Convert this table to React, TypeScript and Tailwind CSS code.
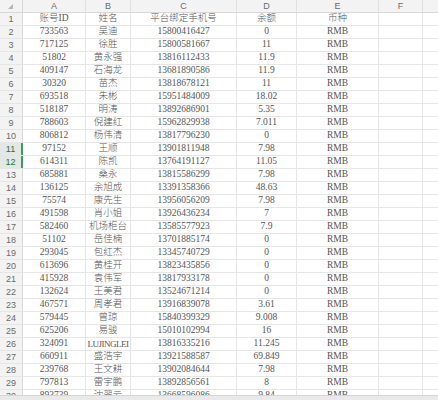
const cols = [
  { key: 'A', w: 'w-[63px]' },
  { key: 'B', w: 'w-[45px]' },
  { key: 'C', w: 'w-[106px]' },
  { key: 'D', w: 'w-[60px]' },
  { key: 'E', w: 'w-[82px]' },
  { key: 'F', w: 'w-[44px]' },
  { key: 'G', w: 'w-[60px]' },
];

const rows: string[][] = [
  ['账号ID', '姓名', '平台绑定手机号', '余额', '币种'],
  ['733563', '吴迪', '15800416427', '0', 'RMB'],
  ['717125', '徐胜', '15800581667', '11', 'RMB'],
  ['51802', '黄永强', '13816112433', '11.9', 'RMB'],
  ['409147', '石海龙', '13681890586', '11.9', 'RMB'],
  ['30320', '苗杰', '13818678121', '11', 'RMB'],
  ['693518', '朱彬', '15951484009', '18.02', 'RMB'],
  ['518187', '明涛', '13892686901', '5.35', 'RMB'],
  ['788603', '倪建红', '15962829938', '7.011', 'RMB'],
  ['806812', '杨伟清', '13817796230', '0', 'RMB'],
  ['97152', '王顺', '13901811948', '7.98', 'RMB'],
  ['614311', '陈凯', '13764191127', '11.05', 'RMB'],
  ['685881', '桑永', '13815586299', '7.98', 'RMB'],
  ['136125', '余旭成', '13391358366', '48.63', 'RMB'],
  ['75574', '康先生', '13956056209', '7.98', 'RMB'],
  ['491598', '肖小姐', '13926436234', '7', 'RMB'],
  ['582460', '机场柜台', '13585577923', '7.9', 'RMB'],
  ['51102', '岳佳楠', '13701885174', '0', 'RMB'],
  ['293045', '包红杰', '13345740729', '0', 'RMB'],
  ['613696', '黄桂开', '13823435856', '0', 'RMB'],
  ['415928', '袁伟军', '13817933178', '0', 'RMB'],
  ['132624', '王美君', '13524671214', '0', 'RMB'],
  ['467571', '周孝君', '13916839078', '3.61', 'RMB'],
  ['579445', '曾琼', '15840399329', '9.008', 'RMB'],
  ['625206', '易骏', '15010102994', '16', 'RMB'],
  ['324091', 'LUJINGLEI', '13816335216', '11.245', 'RMB'],
  ['660911', '盛浩宇', '13921588587', '69.849', 'RMB'],
  ['239768', '王文耕', '13902084644', '7.98', 'RMB'],
  ['797813', '雷宇鹏', '13892856561', '8', 'RMB'],
  ['893739', '沈翠云', '13668596086', '9.84', 'RMB'],
];

const selected = [11, 12];

export default function App() {
  return (
    <div className="w-[438px] h-[400px] overflow-hidden bg-white flex flex-col">
      <div className="h-[395px] overflow-hidden">
        {/* column letters */}
        <div className="flex h-[13px] bg-[#f3f3f3] border-b border-[#d8d8d8] font-['Liberation_Sans',sans-serif] text-[9px] text-[#6a6a6a]">
          <div className="w-[23px] shrink-0 border-r border-[#d8d8d8] flex items-end justify-end pr-[9px] pb-[3px]">
            <svg width="5" height="5" viewBox="0 0 5 5">
              <polygon points="5,0 5,5 0,5" fill="#b5b5b5" />
            </svg>
          </div>
          {cols.map((c) => (
            <div key={c.key} className={`${c.w} shrink-0 border-r border-[#e0e0e0] flex items-center justify-center leading-none`}>
              {c.key}
            </div>
          ))}
        </div>

        {rows.map((r, i) => {
          const n = i + 1;
          const sel = selected.includes(n);
          return (
            <div key={n} className="flex h-[13px] border-b border-[#e6e6e6]">
              <div
                className={
                  sel
                    ? 'w-[23px] shrink-0 bg-[#e4e8e4] border-r-2 border-[#3c9a5f] text-[#217346] text-[9px] flex items-center justify-center leading-none font-["Liberation_Sans",sans-serif]'
                    : 'w-[23px] shrink-0 bg-[#f3f3f3] border-r border-[#d8d8d8] text-[#6a6a6a] text-[9px] flex items-center justify-center leading-none font-["Liberation_Sans",sans-serif]'
                }
              >
                {n}
              </div>
              {cols.map((c, j) => (
                <div
                  key={c.key}
                  className={`${c.w} shrink-0 border-r border-[#e6e6e6] flex items-center justify-center leading-none whitespace-nowrap text-[9.5px] font-light text-[#555] font-['Liberation_Serif','Noto_Sans_CJK_SC',serif]`}
                >
                  {r[j] === 'LUJINGLEI' ? <span className="tracking-[-0.5px] text-[9px]">{r[j]}</span> : r[j] ?? ''}
                </div>
              ))}
            </div>
          );
        })}
      </div>
      <div className="h-[5px] bg-[#e9e9e9] border-t border-[#d6d6d6]" />
    </div>
  );
}
